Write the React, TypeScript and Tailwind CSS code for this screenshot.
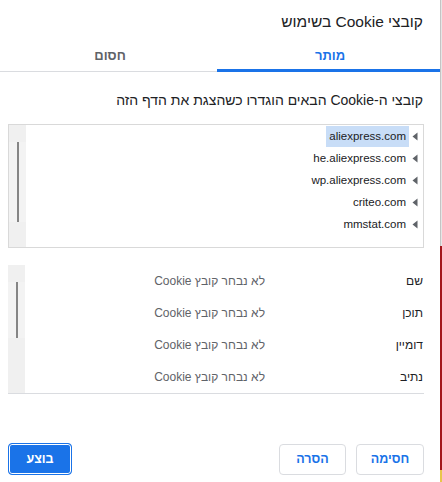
import React from 'react';

const font = { fontFamily: '"Segoe UI", "Liberation Sans", "Noto Sans", sans-serif' };

const sites = ['aliexpress.com', 'he.aliexpress.com', 'wp.aliexpress.com', 'criteo.com', 'mmstat.com'];
const details = ['שם', 'תוכן', 'דומיין', 'נתיב'];

const Arrow: React.FC = () => (
  <svg width="6" height="9" viewBox="0 0 6 9" className="shrink-0">
    <path d="M5.5 0.5 L0.5 4.5 L5.5 8.5 Z" fill="#5f6368" />
  </svg>
);

const Scrollbar: React.FC<{ thumbTop: string; thumbHeight: string }> = ({ thumbTop, thumbHeight }) => (
  <div className="w-[17px] shrink-0 bg-[#f0f0f0] flex flex-col">
    <div className={`${thumbTop} shrink-0`} />
    <div className={`${thumbHeight} shrink-0 flex justify-center bg-[#f3f3f3]`}>
      <div className="w-[2px] h-full bg-[#858585]" />
    </div>
  </div>
);

export default function App() {
  return (
    <div className="flex w-[442px] h-[482px] bg-white overflow-hidden" style={font}>
      <div dir="rtl" className="w-[440px] shrink-0 flex flex-col bg-white">
        <div className="h-[44px] flex items-center pr-[17px] text-[15.5px] text-[#202124]">
          קובצי Cookie בשימוש
        </div>

        <div className="grid grid-cols-2 h-[28px] border-b border-[#dadce0]">
          <div className="relative flex items-center justify-center text-[13px] font-bold text-[#1a73e8] pb-[3px]">
            מותר
            <div className="absolute bottom-[-1px] left-[-3px] right-0 h-[3px] bg-[#1a73e8]" />
          </div>
          <div className="flex items-center justify-center text-[13px] font-bold text-[#5f6368] pb-[3px]">
            חסום
          </div>
        </div>

        <div className="mt-[18px] mb-[14px] pr-[17px] h-[20px] leading-[20px] text-[14px] text-[#202124]">
          קובצי ה-Cookie הבאים הוגדרו כשהצגת את הדף הזה
        </div>

        <div className="mr-[16px] ml-[8px] h-[124px] border border-[#d9d9d9] flex">
          <div className="flex-1 flex flex-col">
            {sites.map((s, i) => (
              <div key={s} className="h-[22px] flex items-center pr-[5px] gap-[3px] text-[11.5px] text-[#202124]">
                <Arrow />
                <span className={`px-[3px] h-[21px] leading-[21px] ${i === 0 ? 'bg-[#c8ddf7]' : ''}`}>
                  {s}
                </span>
              </div>
            ))}
          </div>
          <Scrollbar thumbTop="h-[17px]" thumbHeight="h-[80px]" />
        </div>

        <div className="mt-[17px] mr-[16px] ml-[8px] h-[129px] border-b border-[#dadce0] flex">
          <div className="flex-1 flex flex-col">
            {details.map((d) => (
              <div key={d} className="h-[32px] flex items-center text-[12px]">
                <div className="w-[159px] pr-[1px] shrink-0 text-[#202124]">{d}</div>
                <div className="text-[#5f6368]">לא נבחר קובץ Cookie</div>
              </div>
            ))}
          </div>
          <Scrollbar thumbTop="h-[17px]" thumbHeight="h-[56px]" />
        </div>

        <div className="mt-[49px] flex items-center mr-[16px] ml-[8px] gap-[10px] text-[12.5px] font-bold">
          <button className="w-[68px] h-[31px] rounded-[4px] border border-[#dadce0] bg-white text-[#1a73e8]">
            חסימה
          </button>
          <button className="w-[67px] h-[31px] rounded-[4px] border border-[#dadce0] bg-white text-[#1a73e8]">
            הסרה
          </button>
          <div className="flex-1" />
          <button className="w-[64px] h-[32px] rounded-[4px] border border-[#1a73e8] bg-[#1a73e8] text-white shadow-[inset_0_0_0_1px_white]">
            בוצע
          </button>
        </div>
      </div>

      <div className="w-[2px] shrink-0 flex flex-col">
        <div className="h-[246px] bg-[#e6e6e6] border-l border-[#c4c4c4]" />
        <div className="h-[224px] bg-[#a3171c]" />
        <div className="flex-1 bg-[#e8c64a]" />
      </div>
    </div>
  );
}
